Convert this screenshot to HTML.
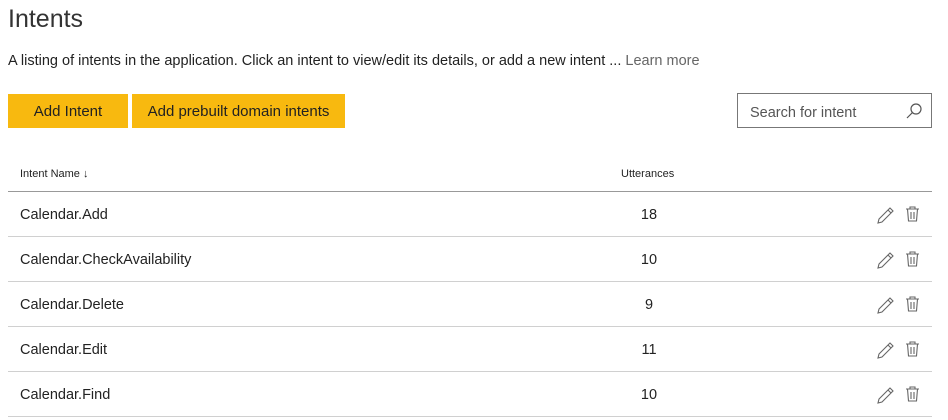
<!DOCTYPE html>
<html><head><style>
body{margin:0;width:948px;height:420px;background:#fff;font-family:"Liberation Sans",sans-serif;color:#222;position:relative;overflow:hidden}
.a{position:absolute;white-space:nowrap}
.btn{position:absolute;top:94px;height:34px;background:#f8b90f;font-size:15px;line-height:36px;text-align:center;color:#222}
.row{position:absolute;left:8px;width:924px;height:44px;border-bottom:1px solid #d0d0d0}
.row .n{position:absolute;left:12px;top:15px;font-size:14.5px}
.row .u{position:absolute;left:600px;width:82px;text-align:center;top:15px;font-size:14.5px}
</style></head><body>
<div class="a" style="left:8px;top:5px;font-size:25px;color:#333;font-weight:300">Intents</div>
<div class="a" style="left:8px;top:53px;font-size:14.5px">A listing of intents in the application. Click an intent to view/edit its details, or add a new intent ... <span style="color:#666">Learn more</span></div>
<div class="btn" style="left:8px;width:120px">Add Intent</div>
<div class="btn" style="left:132px;width:213px">Add prebuilt domain intents</div>
<div class="a" style="left:737px;top:93px;width:193px;height:33px;border:1px solid #777"><span style="position:absolute;left:12px;top:11px;font-size:14.5px;color:#555">Search for intent</span>
<svg style="position:absolute;left:167px;top:8px" width="18" height="18" viewBox="0 0 18 18" fill="none" stroke="#555" stroke-width="1.2"><circle cx="11" cy="7" r="5"/><path d="M7.5 10.5L2 16"/></svg></div>
<div class="a" style="left:20px;top:168px;font-size:11px">Intent Name &#8595;</div>
<div class="a" style="left:621px;top:168px;font-size:11px">Utterances</div>
<div class="a" style="left:8px;top:191px;width:924px;height:1px;background:#999"></div>
<div class="row" style="top:192px"><span class="n">Calendar.Add</span><span class="u">18</span></div>
<div class="row" style="top:237px"><span class="n">Calendar.CheckAvailability</span><span class="u">10</span></div>
<div class="row" style="top:282px"><span class="n">Calendar.Delete</span><span class="u">9</span></div>
<div class="row" style="top:327px"><span class="n">Calendar.Edit</span><span class="u">11</span></div>
<div class="row" style="top:372px"><span class="n">Calendar.Find</span><span class="u">10</span></div>
<svg style="position:absolute;left:0;top:0" width="948" height="420">
<defs><g id="ic" fill="none" stroke="#666" stroke-width="1.1">
<path d="M879 219l11-11 3 3-11 11-4 1z M888 210l3 3"/>
<path d="M906 209h13 M910 209v-2h5v2 M907.5 209l1 12h8l1-12 M911 212v7 M914 212v7"/>
</g></defs>
<use href="#ic" y="0"/><use href="#ic" y="45"/><use href="#ic" y="90"/><use href="#ic" y="135"/><use href="#ic" y="180"/>
</svg>
</body></html>
